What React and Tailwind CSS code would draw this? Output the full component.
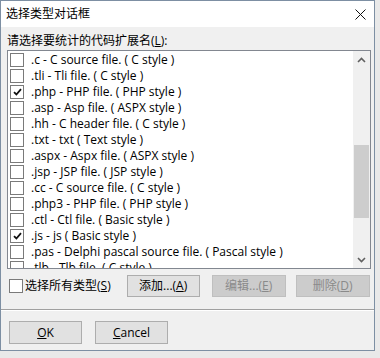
import React from 'react';

const items = [
  { ext: '.c - C source file. ( C style )' },
  { ext: '.tli - Tli file. ( C style )' },
  { ext: '.php - PHP file. ( PHP style )', on: true },
  { ext: '.asp - Asp file. ( ASPX style )' },
  { ext: '.hh - C header file. ( C style )' },
  { ext: '.txt - txt ( Text style )' },
  { ext: '.aspx - Aspx file. ( ASPX style )' },
  { ext: '.jsp - JSP file. ( JSP style )' },
  { ext: '.cc - C source file. ( C style )' },
  { ext: '.php3 - PHP file. ( PHP style )' },
  { ext: '.ctl - Ctl file. ( Basic style )' },
  { ext: '.js - js ( Basic style )', on: true },
  { ext: '.pas - Delphi pascal source file. ( Pascal style )' },
  { ext: '.tlb - Tlb file. ( C style )' },
];

function Check({ on }) {
  return (
    <span className="flex h-[14px] w-[14px] shrink-0 items-center justify-center border border-[#7a7a7a] bg-white">
      {on && (
        <svg width="9" height="8" viewBox="0 0 9 8">
          <path d="M1 4.2 L3.4 6.5 L8 1.2" fill="none" stroke="#111" strokeWidth="1.8" />
        </svg>
      )}
    </span>
  );
}

function Btn({ children, disabled, className = '' }) {
  return (
    <div
      className={
        'flex items-center justify-center border text-[12px] ' +
        (disabled
          ? 'border-[#bfbfbf] bg-[#cccccc] text-[#8a8a8a] '
          : 'border-[#adadad] bg-[#e1e1e1] text-black ') +
        className
      }
    >
      {children}
    </div>
  );
}

export default function App() {
  return (
    <div
      className="h-[358px] w-[380px] overflow-hidden bg-[#e9e9e9]"
      style={{ fontFamily: '"Open Sans", "Noto Sans CJK SC", sans-serif' }}
    >
      <div className="flex h-[351px] w-[375px] flex-col border border-[#7d8fa3] bg-[#f0f0f0]">
        {/* title bar */}
        <div className="flex h-[26px] items-center justify-between bg-white pl-[5px] pr-[8px]">
          <span className="text-[12px] text-black">选择类型对话框</span>
          <svg width="11" height="11" viewBox="0 0 11 11">
            <path d="M0.5 0.5 L10.5 10.5 M10.5 0.5 L0.5 10.5" stroke="#111" strokeWidth="1" />
          </svg>
        </div>

        <div className="pl-[6px] pt-[6px] text-[12px] leading-[16px] text-black">
          请选择要统计的代码扩展名(<span className="underline">L</span>):
        </div>

        {/* list */}
        <div className="ml-[6px] mt-[1px] flex h-[219px] w-[364px] border border-[#828790] bg-white">
          <div className="flex-1 overflow-hidden pt-[1px]">
            {items.map((it, i) => (
              <div key={i} className="flex h-[16px] items-center pl-[2px]">
                <Check on={it.on} />
                <span className="ml-[7px] whitespace-nowrap text-[12px] leading-[16px] text-black">{it.ext}</span>
              </div>
            ))}
          </div>
          <div className="flex w-[17px] flex-col bg-[#f0f0f0]">
            <div className="flex h-[17px] items-center justify-center">
              <svg width="9" height="6" viewBox="0 0 9 6">
                <path d="M1 5 L4.5 1.5 L8 5" fill="none" stroke="#606060" strokeWidth="1.6" />
              </svg>
            </div>
            <div className="mx-[1px] mt-[77px] h-[73px] bg-[#cdcdcd]" />
            <div className="flex-1" />
            <div className="flex h-[17px] items-center justify-center">
              <svg width="9" height="6" viewBox="0 0 9 6">
                <path d="M1 1 L4.5 4.5 L8 1" fill="none" stroke="#606060" strokeWidth="1.6" />
              </svg>
            </div>
          </div>
        </div>

        {/* actions */}
        <div className="mt-[6px] flex items-center pl-[8px]">
          <Check />
          <span className="ml-[2px] text-[12px] text-black">
            选择所有类型(<span className="underline">S</span>)
          </span>
          <Btn className="ml-[16px] h-[22px] w-[73px]">
            添加...(<span className="underline">A</span>)
          </Btn>
          <Btn disabled className="ml-[12px] h-[22px] w-[74px]">
            编辑...(<span className="underline">E</span>)
          </Btn>
          <Btn disabled className="ml-[10px] h-[22px] w-[74px]">
            删除(<span className="underline">D</span>)
          </Btn>
        </div>

        <div className="mt-[12px] h-[2px] border-t border-b border-t-[#a0a0a0] border-b-white" />

        <div className="mt-[10px] flex pl-[8px]">
          <Btn className="h-[23px] w-[73px]">
            <span className="underline">O</span>K
          </Btn>
          <Btn className="ml-[13px] h-[23px] w-[73px]">
            <span className="underline">C</span>ancel
          </Btn>
        </div>
      </div>
    </div>
  );
}
